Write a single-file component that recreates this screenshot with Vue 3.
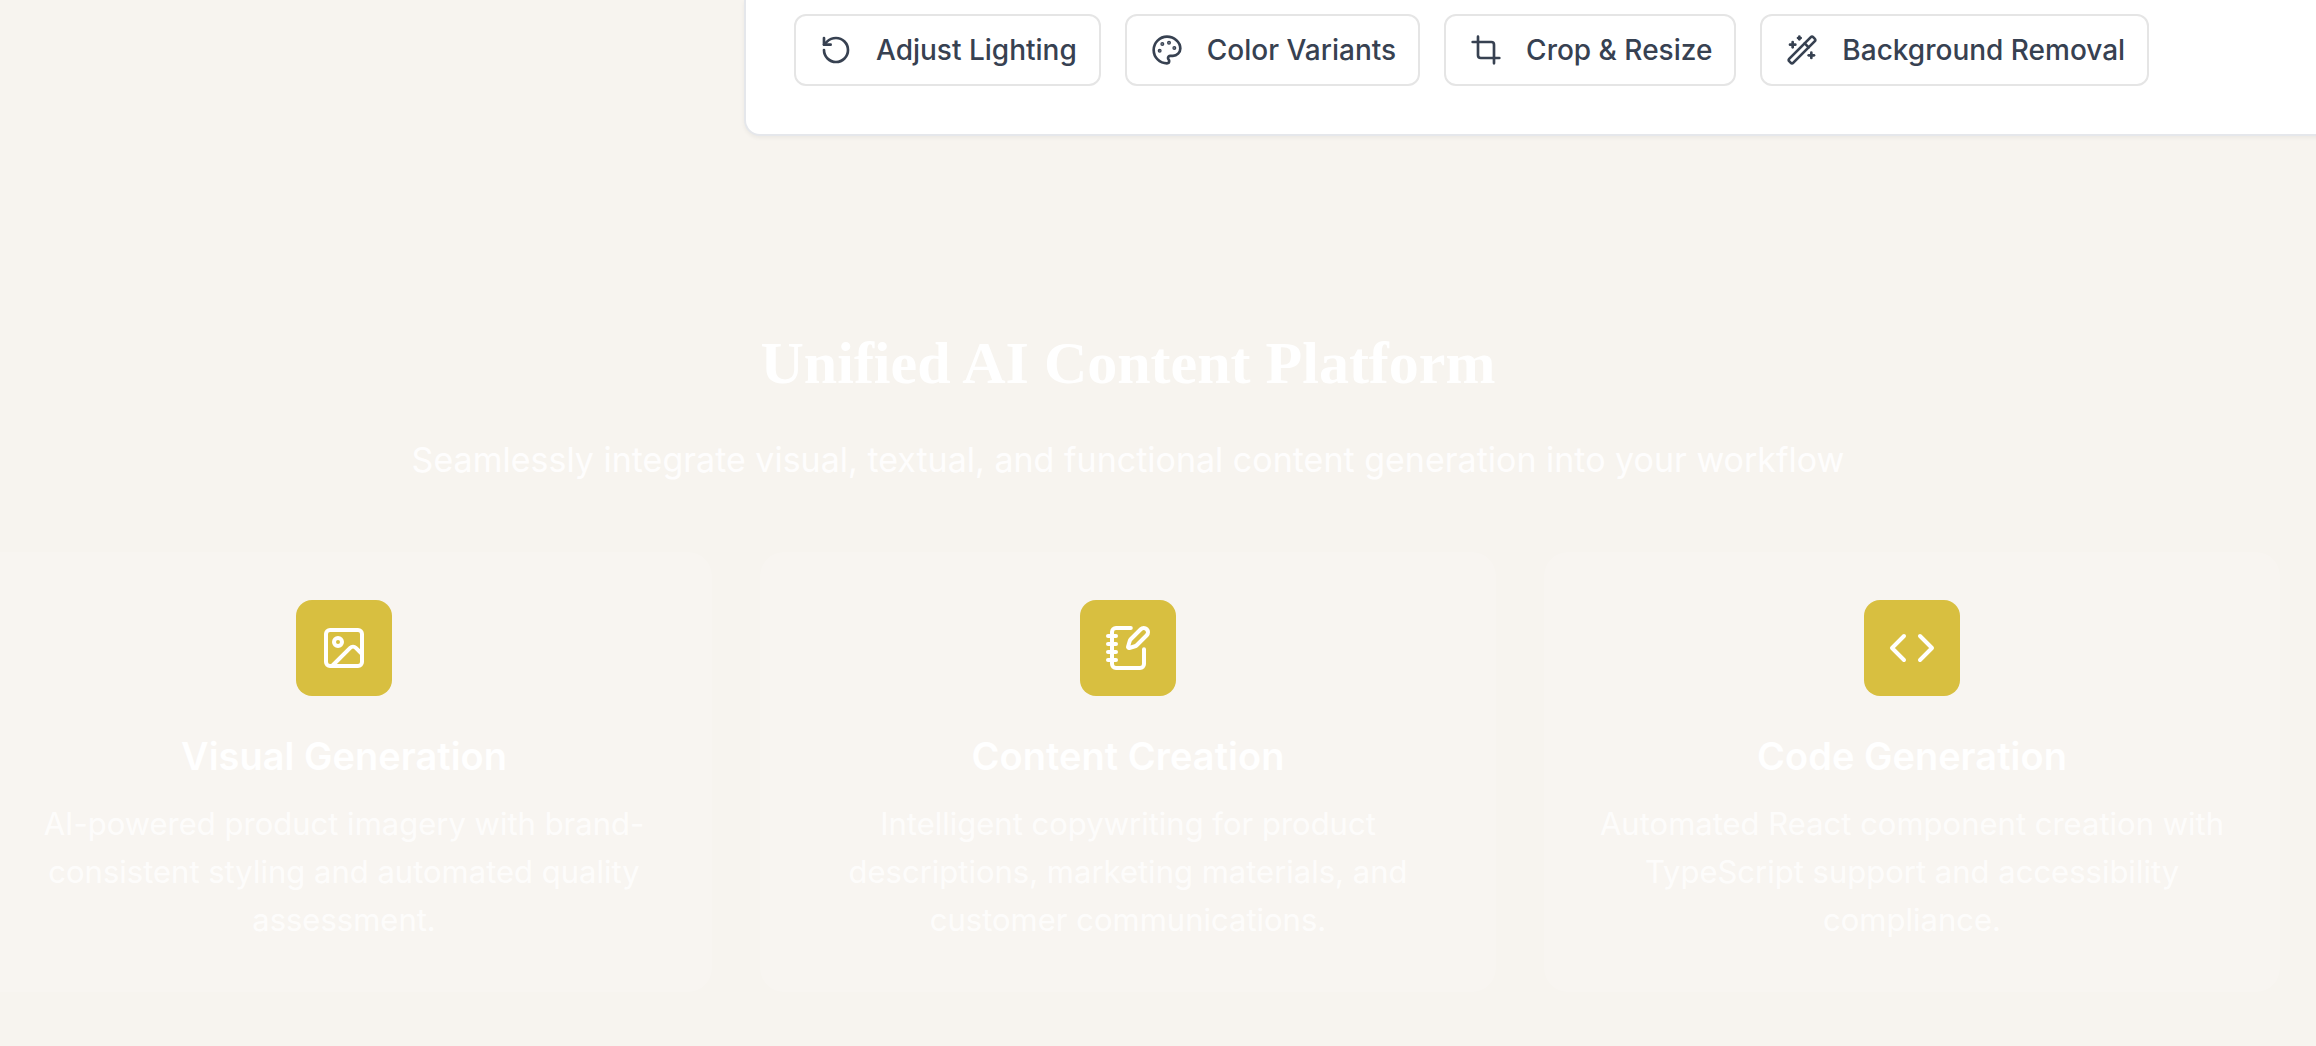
<script setup>
const tools = [
  {
    label: 'Adjust Lighting',
    icon: ['M3 12a9 9 0 1 0 9-9 9.75 9.75 0 0 0-6.74 2.74L3 8', 'M3 3v5h5'],
  },
  {
    label: 'Color Variants',
    icon: [
      'M12 2C6.5 2 2 6.5 2 12s4.5 10 10 10c.926 0 1.648-.746 1.648-1.688 0-.437-.18-.835-.437-1.125-.29-.289-.438-.652-.438-1.125a1.64 1.64 0 0 1 1.668-1.668h1.996c3.051 0 5.555-2.503 5.555-5.554C21.965 6.012 17.461 2 12 2z',
    ],
    dots: [[13.5, 6.5], [17.5, 10.5], [8.5, 7.5], [6.5, 12.5]],
  },
  {
    label: 'Crop & Resize',
    icon: ['M6 2v14a2 2 0 0 0 2 2h14', 'M18 22V8a2 2 0 0 0-2-2H2'],
  },
  {
    label: 'Background Removal',
    icon: [
      'm21.64 3.64-1.28-1.28a1.21 1.21 0 0 0-1.72 0L2.36 18.64a1.21 1.21 0 0 0 0 1.72l1.28 1.28a1.2 1.2 0 0 0 1.72 0L21.64 5.36a1.2 1.2 0 0 0 0-1.72',
      'm14 7 3 3', 'M5 6v4', 'M19 14v4', 'M10 2v2', 'M7 8H3', 'M21 16h-4', 'M11 3H9',
    ],
  },
]

const features = [
  {
    title: 'Visual Generation',
    text: 'AI-powered product imagery with brand-consistent styling and automated quality assessment.',
    icon: [
      'M5 3h14a2 2 0 0 1 2 2v14a2 2 0 0 1-2 2H5a2 2 0 0 1-2-2V5a2 2 0 0 1 2-2z',
      'M11 9a2 2 0 1 1-4 0 2 2 0 0 1 4 0z',
      'm21 15-3.086-3.086a2 2 0 0 0-2.828 0L6 21',
    ],
  },
  {
    title: 'Content Creation',
    text: 'Intelligent copywriting for product descriptions, marketing materials, and customer communications.',
    icon: [
      'M13.4 2H6a2 2 0 0 0-2 2v16a2 2 0 0 0 2 2h12a2 2 0 0 0 2-2v-7.4',
      'M2 6h4', 'M2 10h4', 'M2 14h4', 'M2 18h4',
      'M21.378 5.626a1 1 0 1 0-3.004-3.004l-5.01 5.012a2 2 0 0 0-.506.854l-.837 2.87a.5.5 0 0 0 .62.62l2.87-.837a2 2 0 0 0 .854-.506z',
    ],
  },
  {
    title: 'Code Generation',
    text: 'Automated React component creation with TypeScript support and accessibility compliance.',
    icon: ['m16 18 6-6-6-6', 'm8 6-6 6 6 6'],
  },
]
</script>

<template>
  <main class="page">
    <section class="panel">
      <button v-for="tool in tools" :key="tool.label" type="button" class="tool">
        <svg viewBox="0 0 24 24" class="tool-icon" aria-hidden="true">
          <path v-for="d in tool.icon" :key="d" :d="d" />
          <circle v-for="dot in tool.dots" :key="dot.join()" :cx="dot[0]" :cy="dot[1]" r=".5" class="dot" />
        </svg>
        <span>{{ tool.label }}</span>
      </button>
    </section>

    <section class="platform">
      <h2>Unified AI Content Platform</h2>
      <p class="lead">Seamlessly integrate visual, textual, and functional content generation into your workflow</p>
      <div class="grid">
        <article v-for="feature in features" :key="feature.title" class="card">
          <div class="badge">
            <svg viewBox="0 0 24 24" aria-hidden="true">
              <path v-for="d in feature.icon" :key="d" :d="d" />
            </svg>
          </div>
          <h3>{{ feature.title }}</h3>
          <p>{{ feature.text }}</p>
        </article>
      </div>
    </section>
  </main>
</template>

<style>
body {
  margin: 0;
  background: #f7f4ef;
}
</style>

<style scoped>
.page {
  overflow: hidden;
  font-family: Inter, "Noto Sans", sans-serif;
}

.panel {
  display: flex;
  gap: 24px;
  margin: 0 -24px 0 744px;
  padding: 14px 48px 48px;
  border: 2px solid #e5e7eb;
  border-top: 0;
  border-radius: 0 0 16px 16px;
  background: #fff;
  box-shadow: 0 2px 4px rgba(0, 0, 0, 0.05);
}

.tool {
  display: flex;
  align-items: center;
  gap: 24px;
  height: 72px;
  padding: 0 22px 0 24px;
  border: 2px solid #e5e5e5;
  border-radius: 12px;
  background: #fff;
  color: #374151;
  font: 500 28px/40px Inter, "Noto Sans", sans-serif;
  white-space: nowrap;
}

svg {
  display: block;
  fill: none;
  stroke: currentColor;
  stroke-width: 2;
  stroke-linecap: round;
  stroke-linejoin: round;
}

.tool-icon {
  width: 32px;
  height: 32px;
}

.dot {
  fill: currentColor;
}

.platform {
  margin: 0 36px 0 -24px;
  padding: 192px 0 48px;
  color: #fff;
  text-align: center;
}

h2 {
  margin: 0 0 34px;
  font: 700 60px/70px "Liberation Serif", serif;
}

.lead {
  margin: 0 0 64px;
  color: rgba(255, 255, 255, 0.9);
  font-size: 34px;
  line-height: 56px;
}

.grid {
  display: grid;
  grid-template-columns: repeat(3, 1fr);
  gap: 48px;
}

.card {
  padding: 48px;
  border-radius: 24px;
  background: rgba(255, 255, 255, 0.15);
}

.badge {
  display: grid;
  place-items: center;
  width: 96px;
  height: 96px;
  margin: 0 auto 32px;
  border-radius: 16px;
  background: #d8bf40;
}

.badge svg {
  width: 48px;
  height: 48px;
}

h3 {
  margin: 0 0 16px;
  font-size: 38px;
  font-weight: 600;
  line-height: 56px;
}

.card p {
  margin: 0;
  color: rgba(255, 255, 255, 0.8);
  font-size: 31px;
  line-height: 48px;
}
</style>
